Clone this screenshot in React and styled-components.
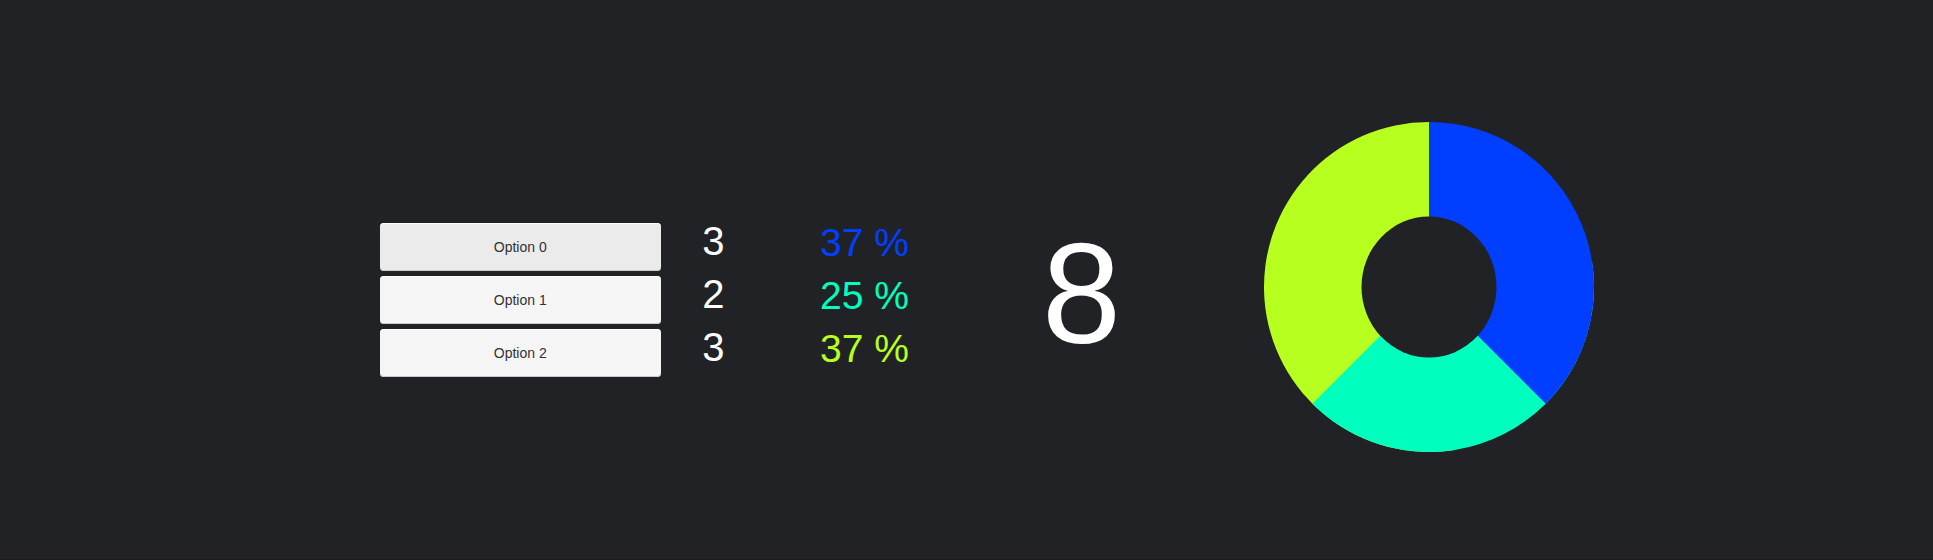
import React from "react";
import styled, { createGlobalStyle } from "styled-components";

const GlobalStyle = createGlobalStyle`
  *, *::before, *::after { box-sizing: border-box; }
  body {
    margin: 0;
    background: #202225;
    color: #ffffff;
    font-family: "Liberation Sans", Arial, sans-serif;
  }
`;

const Page = styled.main`
  display: grid;
  grid-template-columns: 583fr 237fr 458fr;
  align-items: center;
  min-height: 100vh;
  padding: 14px 14.2% 0 19.64%;
  border-bottom: 1px solid #1e1a20;
`;

const OptionList = styled.ul`
  display: grid;
  gap: 5px;
  margin: 0;
  padding: 27px 0 0;
  list-style: none;
`;

const OptionRow = styled.li`
  display: grid;
  grid-template-columns: 281fr 105fr 197fr;
  height: 48px;
`;

const VoteButton = styled.button`
  padding: 0;
  border: 0;
  border-radius: 4px;
  background: ${({ $active }) => ($active ? "#ebebeb" : "#f5f5f5")};
  box-shadow: inset 0 1px 0 #ffffff, inset 0 -1px 0 #c8cac9;
  color: #323232;
  font: inherit;
  font-size: 14px;
  line-height: 16px;
  cursor: pointer;
`;

const Figure = styled.span`
  display: flex;
  align-items: center;
  justify-content: center;
  line-height: 36px;
  white-space: nowrap;
`;

const Count = styled(Figure)`
  padding-bottom: 12px;
  font-size: 40px;
`;

const Percent = styled(Figure)`
  padding-bottom: 8px;
  color: ${({ $color }) => $color};
  font-size: 39px;
`;

const Total = styled.output`
  padding-top: 15px;
  font-size: 142px;
  line-height: 160px;
  text-align: center;
`;

const Chart = styled.svg`
  display: block;
  justify-self: center;
  width: 330px;
  max-width: 100%;
  height: auto;
`;

const options = [
  { label: "Option 0", votes: 3, color: "#003fff" },
  { label: "Option 1", votes: 2, color: "#00ffbe" },
  { label: "Option 2", votes: 3, color: "#b7ff1e" },
];

const total = options.reduce((sum, option) => sum + option.votes, 0);

const RADIUS = 165;
const OVERLAP = 0.15;

function rimPoint(share) {
  const angle = share * 2 * Math.PI;
  return `${RADIUS * Math.sin(angle)} ${-RADIUS * Math.cos(angle)}`;
}

// Clockwise sector between two shares of the disc, measured from twelve o'clock.
function sectorPath(from, to) {
  const large = to - from > 0.5 ? 1 : 0;
  return `M0 0L${rimPoint(from)}A${RADIUS} ${RADIUS} 0 ${large} 1 ${rimPoint(to)}Z`;
}

// Sectors are painted last to first, each tucked under its predecessor so no seam shows.
function Donut() {
  let running = 0;
  const layers = options
    .map(({ votes, color }) => {
      const from = Math.max(0, running / total - OVERLAP);
      running += votes;
      return { color, from, to: running / total };
    })
    .reverse();

  return (
    <Chart viewBox="-165 -165 330 330" role="img" aria-label="Share of votes">
      {layers.map(({ color, from, to }) => (
        <path key={color} d={sectorPath(from, to)} fill={color} />
      ))}
      <ellipse rx="67.5" ry="70.5" fill="#202225" />
    </Chart>
  );
}

export default function App() {
  const [selected, setSelected] = React.useState(0);

  return (
    <>
      <GlobalStyle />
      <Page>
        <OptionList>
          {options.map(({ label, votes, color }, index) => (
            <OptionRow key={label}>
              <VoteButton
                type="button"
                $active={index === selected}
                onClick={() => setSelected(index)}
              >
                {label}
              </VoteButton>
              <Count>{votes}</Count>
              <Percent $color={color}>{Math.floor((votes / total) * 100)} %</Percent>
            </OptionRow>
          ))}
        </OptionList>
        <Total>{total}</Total>
        <Donut />
      </Page>
    </>
  );
}
